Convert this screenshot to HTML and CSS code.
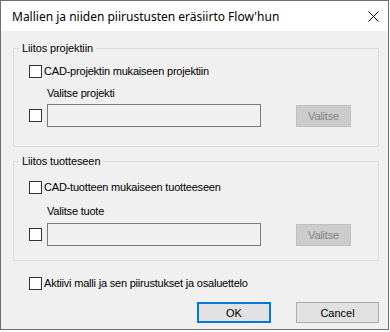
FILE: index.html
```html
<!DOCTYPE html>
<html lang="fi">
<head>
<meta charset="utf-8">
<title>Mallien ja niiden piirustusten eräsiirto Flow'hun</title>
<link rel="stylesheet" href="styles.css">
</head>
<body>
<div class="window">
  <div class="titlebar">
    <span class="title">Mallien ja niiden piirustusten eräsiirto Flow'hun</span>
    <svg class="close" width="11" height="11" viewBox="0 0 11 11"><path d="M0.5 0.5 L10.5 10.5 M10.5 0.5 L0.5 10.5" stroke="#000" stroke-width="1" fill="none"/></svg>
  </div>
  <div class="content">
    <fieldset class="group">
      <legend class="legend">Liitos projektiin</legend>
      <div class="group-body">
        <div class="check-row"><span class="cb"></span><span class="cb-label">CAD-projektin mukaiseen projektiin</span></div>
        <div class="sub-label">Valitse projekti</div>
        <div class="field-row"><span class="cb"></span><span class="field"></span><span class="btn-disabled">Valitse</span></div>
      </div>
    </fieldset>
    <fieldset class="group group-b">
      <legend class="legend">Liitos tuotteseen</legend>
      <div class="group-body">
        <div class="check-row"><span class="cb"></span><span class="cb-label">CAD-tuotteen mukaiseen tuotteeseen</span></div>
        <div class="sub-label">Valitse tuote</div>
        <div class="field-row"><span class="cb"></span><span class="field"></span><span class="btn-disabled">Valitse</span></div>
      </div>
    </fieldset>
    <div class="bottom-check"><span class="cb"></span><span class="cb-label">Aktiivi malli ja sen piirustukset ja osaluettelo</span></div>
    <div class="buttons">
      <span class="btn btn-default">OK</span>
      <span class="btn btn-cancel">Cancel</span>
    </div>
  </div>
</div>
</body>
</html>
```
FILE: styles.css
```css
html, body {
  margin: 0;
  padding: 0;
  background: #ffffff;
}
body {
  font-family: "Liberation Sans", Arial, sans-serif;
  font-size: 11px;
  color: #000;
}
.window {
  width: 389px;
  height: 330px;
  box-sizing: border-box;
  border: 1px solid #707070;
  display: flex;
  flex-direction: column;
}
.titlebar {
  height: 30px;
  flex: none;
  background: #fff;
  display: flex;
  align-items: center;
  padding-left: 11px;
  padding-right: 9px;
}
.title {
  font-family: "Noto Sans", "Open Sans", sans-serif;
  font-size: 12px;
  line-height: 16px;
  flex: 1;
  padding-top: 1px;
}
.close {
  display: block;
  margin-top: 1px;
}
.content {
  flex: 1;
  background: #f0f0f0;
  padding: 11px 9px 0 12px;
}
.group {
  margin: 0;
  padding: 0;
  border: 1px solid #dcdcdc;
  min-width: 0;
}
.legend {
  margin-left: 5px;
  padding: 0 3px;
  line-height: 13px;
  font-size: 11px;
  letter-spacing: -0.1px;
}
.group-body {
  padding-bottom: 19px;
}
.check-row {
  display: flex;
  align-items: center;
  height: 13px;
  margin-top: 10px;
  padding-left: 15px;
}
.cb {
  display: block;
  width: 13px;
  height: 13px;
  box-sizing: border-box;
  border: 1px solid #333;
  background: #fff;
  flex: none;
}
.cb-label {
  margin-left: 2px;
  line-height: 13px;
  white-space: nowrap;
  letter-spacing: -0.2px;
}
.sub-label {
  margin-top: 9px;
  padding-left: 33px;
  line-height: 13px;
  letter-spacing: -0.2px;
}
.field-row {
  display: flex;
  align-items: center;
  height: 23px;
  margin-top: 4px;
  padding-left: 15px;
}
.field {
  display: block;
  width: 214px;
  height: 23px;
  box-sizing: border-box;
  border: 1px solid #7a7a7a;
  background: #f0f0f0;
  margin-left: 5px;
}
.btn-disabled {
  display: flex;
  align-items: center;
  justify-content: center;
  width: 55px;
  height: 22px;
  box-sizing: border-box;
  margin-left: 35px;
  background: #cccccc;
  border: 1px solid #bfbfbf;
  color: #838383;
  letter-spacing: -0.2px;
}
.group-b {
  margin-top: 8px;
}
.group-b .group-body {
  padding-bottom: 14px;
}
.group-b .check-row {
  margin-top: 13px;
}
.group-b .sub-label {
  margin-top: 11px;
}
.group-b .field-row {
  margin-top: 5px;
}
.bottom-check {
  display: flex;
  align-items: center;
  height: 13px;
  margin-top: 16px;
  padding-left: 16px;
}
.buttons {
  display: flex;
  justify-content: flex-end;
  gap: 25px;
  margin-top: 12px;
}
.btn {
  display: flex;
  align-items: center;
  justify-content: center;
  height: 21px;
  box-sizing: border-box;
  background: #e1e1e1;
}
.btn-default {
  width: 74px;
  border: 2px solid #0078d7;
}
.btn-cancel {
  width: 83px;
  border: 1px solid #adadad;
}
```
